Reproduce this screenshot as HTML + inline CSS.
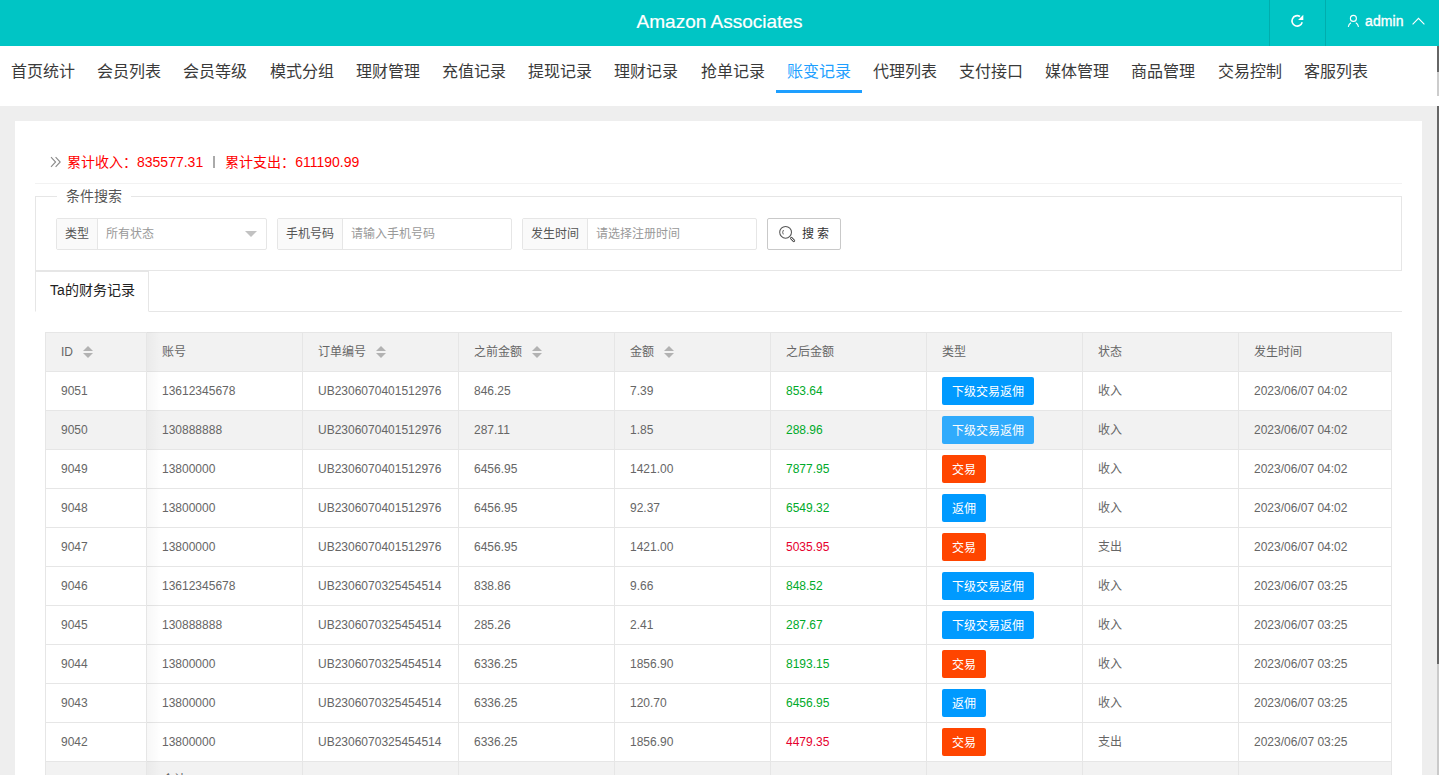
<!DOCTYPE html>
<html lang="zh-CN"><head><meta charset="utf-8"><title>Amazon Associates</title>
<style>
*{margin:0;padding:0;box-sizing:border-box}
html,body{width:1439px;height:775px;overflow:hidden;background:#eeeeee;font-family:"Liberation Sans",sans-serif;color:#333}
ul{list-style:none}
.hdr{position:absolute;left:0;top:0;width:1439px;height:46px;background:#00c5c5}
.title{position:absolute;left:0;width:1439px;top:0;height:46px;line-height:44px;text-align:center;color:#fff;font-size:19px;-webkit-text-stroke:0.2px #fff}
.sep{position:absolute;top:0;width:1px;height:46px;background:rgba(0,0,0,0.12)}
.s1{left:1269px}.s2{left:1325px}
.refresh{position:absolute;left:1290px;top:14px}
.user{position:absolute;left:1346px;top:13px}
.admin{position:absolute;left:1365px;top:12px;color:#fff;font-size:14px;line-height:18px;-webkit-text-stroke:0.35px #fff;letter-spacing:0.1px}
.chev{position:absolute;left:1412px;top:17px}
.nav{position:absolute;left:0;top:46px;width:1439px;height:60px;background:#fff}
.nav ul{position:absolute;left:0;top:0;white-space:nowrap;font-size:0}
.nav li{display:inline-block;padding:0 11px;width:86.2px;height:60px;line-height:51px;font-size:16px;color:#3a3a3a;position:relative;text-align:left}
.nav li.act{color:#1e9fff}
.nav li.act:after{content:"";position:absolute;left:0;right:0;top:44px;height:3px;background:#1e9fff}
.navsb1{position:absolute;left:1437px;top:0;width:2px;height:26px;background:#666}
.navsb2{position:absolute;left:1437px;top:26px;width:2px;height:24px;background:#ccc}
.sb{position:absolute;left:1437px;top:106px;width:2px;height:558px;background:#666}
.sbt{position:absolute;left:1437px;top:664px;width:2px;height:111px;background:#cacaca}
.main{position:absolute;left:0;top:106px;width:1437px;height:669px;background:#eee}
.card{position:absolute;left:15px;top:15px;width:1407px;height:700px;background:#fff}
.sum{position:absolute;left:35px;top:31px;height:20px;line-height:20px;font-size:14px;white-space:nowrap}
.dbl{position:absolute;left:0;top:4px}
.sum .red{color:#f00}
.sum span.red:first-of-type{margin-left:17px}
.bar{display:inline-block;width:2px;height:12px;background:#aaa;margin:0 10px 0 10px;vertical-align:-1px}
.hr{position:absolute;left:20px;top:62px;width:1367px;height:1px;background:#f2f2f2}
.fs{position:absolute;left:20px;top:75px;width:1367px;height:75px;border:1px solid #e6e6e6}
.legend{position:absolute;left:21px;top:-11px;padding:0 9px;background:#fff;font-size:14px;line-height:20px;color:#555}
.grp{position:absolute;top:21px;height:32px;border:1px solid #e6e6e6;border-radius:2px;background:#fff}
.lab{position:absolute;left:0;top:0;height:30px;line-height:30px;background:#fafafa;border-right:1px solid #e6e6e6;font-size:12px;color:#555;padding:0 8px}
.inp{position:absolute;top:0;height:30px;line-height:30px;font-size:12px;padding-left:8px}
.ph{color:#999}
.g1{left:20px;width:211px}.g1 .lab{width:41px}.g1 .inp{left:41px}
.g2{left:241px;width:235px}.g2 .lab{width:65px}.g2 .inp{left:65px}
.g3{left:486px;width:235px}.g3 .lab{width:65px}.g3 .inp{left:65px}
.caret{position:absolute;left:188px;top:12px;width:0;height:0;border-left:6px solid transparent;border-right:6px solid transparent;border-top:6px solid #c2c2c2}
.btn{position:absolute;left:731px;top:21px;width:74px;height:32px;border:1px solid #c9c9c9;border-radius:2px;background:#fff}
.mag{position:absolute;left:10px;top:6px}
.bt{position:absolute;left:34px;top:0;line-height:30px;font-size:12px;color:#333}
.tabs{position:absolute;left:20px;top:150px;width:1367px;height:41px;border-bottom:1px solid #e6e6e6}
.tab{position:absolute;left:0;top:0;width:114px;height:41px;border:1px solid #e6e6e6;border-bottom:1px solid #fff;line-height:37px;font-size:14px;color:#222;padding-left:14px}
.tbl{position:absolute;left:30px;top:211px;width:1347px}
table{border-collapse:collapse;table-layout:fixed;width:1347px;font-size:12px;color:#666}
th,td{border:1px solid #e6e6e6;height:39px;padding:0 15px;text-align:left;font-weight:normal;white-space:nowrap;overflow:hidden}
thead th{background:#f2f2f2;color:#666}
tr.hov td{background:#f2f2f2}
tr.tot td{background:#f2f2f2}
td.g{color:#00aa2a}
td.r{color:#e6002e}
.bd{display:inline-block;height:28px;line-height:28px;padding:0 10px;color:#fff;border-radius:2px;font-size:12px;vertical-align:middle}
.bd.b{background:#009aff}
.bd.o{background:#ff4500}
tr.hov .bd{opacity:.8}
.sort{display:inline-block;position:relative;width:10px;height:12px;margin-left:10px;vertical-align:-2px;top:0}
.sort i{position:absolute;left:0;width:0;height:0;border-left:5px solid transparent;border-right:5px solid transparent}
.sort .up{top:0;border-bottom:5px solid #b2b2b2}
.sort .dn{top:7px;border-top:5px solid #b2b2b2}
.fixsh{position:absolute;left:102px;top:0;width:14px;height:600px;background:linear-gradient(to right,rgba(0,0,0,0.03),rgba(0,0,0,0))}

.cj{position:relative;top:-2px}
.bd{padding-top:1px}
.tot td{vertical-align:top;line-height:12px;padding-top:12px}
.tot .cj{top:0}
.sort.sc{top:-2px}

</style></head><body>
<div class="hdr">
  <div class="title">Amazon Associates</div>
  <div class="sep s1"></div><div class="sep s2"></div>
  <svg class="refresh" width="14" height="14" viewBox="0 0 14 14"><path d="M12.2 8.3 A5.2 5.2 0 1 1 10.0 2.5" fill="none" stroke="#fff" stroke-width="1.6"/><path d="M13.3 0.8 L13.3 6.0 L8.1 6.0 Z" fill="#fff"/></svg>
  <svg class="user" width="14" height="15" viewBox="0 0 14 15"><circle cx="7.4" cy="5.4" r="3.0" fill="none" stroke="#fff" stroke-width="1.1"/><path d="M2.3 13.9 C2.6 11.9 3.6 10.5 5.0 9.8" fill="none" stroke="#fff" stroke-width="1.1"/><path d="M9.8 9.8 C11.2 10.5 12.2 11.9 12.5 13.9" fill="none" stroke="#fff" stroke-width="1.1"/></svg>
  <div class="admin">admin</div>
  <svg class="chev" width="13" height="8" viewBox="0 0 13 8"><path d="M0.6 7.4 L6.5 1.3 L12.4 7.4" fill="none" stroke="#fff" stroke-width="1.1"/></svg>
</div>
<div class="nav"><ul><li>首页统计</li><li>会员列表</li><li>会员等级</li><li>模式分组</li><li>理财管理</li><li>充值记录</li><li>提现记录</li><li>理财记录</li><li>抢单记录</li><li class=act>账变记录</li><li>代理列表</li><li>支付接口</li><li>媒体管理</li><li>商品管理</li><li>交易控制</li><li>客服列表</li></ul><div class="navsb1"></div><div class="navsb2"></div></div>
<div class="main">
  <div class="card">
    <div class="sum"><svg class="dbl" width="12" height="12" viewBox="0 0 12 12"><path d="M1 1.2 L5.6 6 L1 10.8 M5.6 1.2 L10.2 6 L5.6 10.8" fill="none" stroke="#8a8a8a" stroke-width="1.1"/></svg><span class="red">累计收入：835577.31</span><span class="bar"></span><span class="red">累计支出：611190.99</span></div>
    <div class="hr"></div>
    <div class="fs"><div class="legend">条件搜索</div>
      <div class="grp g1"><span class="lab">类型</span><span class="inp ph">所有状态</span><i class="caret"></i></div>
      <div class="grp g2"><span class="lab">手机号码</span><span class="inp ph">请输入手机号码</span></div>
      <div class="grp g3"><span class="lab">发生时间</span><span class="inp ph">请选择注册时间</span></div>
      <div class="btn"><svg class="mag" width="19" height="19" viewBox="0 0 19 19"><circle cx="7.6" cy="7.3" r="5.9" fill="none" stroke="#555" stroke-width="1.05"/><path d="M13.4 13.3 L15.8 15.7" stroke="#555" stroke-width="2.7" stroke-linecap="round"/><path d="M13.4 13.3 L15.8 15.7" stroke="#fff" stroke-width="1.0" stroke-linecap="round"/><path d="M5.5 5.0 A3.8 3.8 0 0 0 5.3 9.4" fill="none" stroke="#555" stroke-width="0.9"/></svg><span class="bt">搜 索</span></div>
    </div>
    <div class="tabs"><div class="tab">Ta的财务记录</div></div>
    <div class="tbl">
      <table>
        <colgroup><col style="width:101px"><col style="width:156px"><col style="width:156px"><col style="width:156px"><col style="width:156px"><col style="width:156px"><col style="width:156px"><col style="width:156px"><col style="width:153px"></colgroup>
        <thead><tr><th>ID<span class="sort"><i class="up"></i><i class="dn"></i></span></th><th><span class=cj>账号</span></th><th><span class=cj>订单编号</span><span class="sort sc"><i class="up"></i><i class="dn"></i></span></th><th><span class=cj>之前金额</span><span class="sort sc"><i class="up"></i><i class="dn"></i></span></th><th><span class=cj>金额</span><span class="sort sc"><i class="up"></i><i class="dn"></i></span></th><th><span class=cj>之后金额</span></th><th><span class=cj>类型</span></th><th><span class=cj>状态</span></th><th><span class=cj>发生时间</span></th></tr></thead>
        <tbody><tr><td>9051</td><td>13612345678</td><td>UB2306070401512976</td><td>846.25</td><td>7.39</td><td class="g">853.64</td><td class="tb"><span class="bd b">下级交易返佣</span></td><td><span class="cj">收入</span></td><td>2023/06/07 04:02</td></tr><tr class="hov"><td>9050</td><td>130888888</td><td>UB2306070401512976</td><td>287.11</td><td>1.85</td><td class="g">288.96</td><td class="tb"><span class="bd b">下级交易返佣</span></td><td><span class="cj">收入</span></td><td>2023/06/07 04:02</td></tr><tr><td>9049</td><td>13800000</td><td>UB2306070401512976</td><td>6456.95</td><td>1421.00</td><td class="g">7877.95</td><td class="tb"><span class="bd o">交易</span></td><td><span class="cj">收入</span></td><td>2023/06/07 04:02</td></tr><tr><td>9048</td><td>13800000</td><td>UB2306070401512976</td><td>6456.95</td><td>92.37</td><td class="g">6549.32</td><td class="tb"><span class="bd b">返佣</span></td><td><span class="cj">收入</span></td><td>2023/06/07 04:02</td></tr><tr><td>9047</td><td>13800000</td><td>UB2306070401512976</td><td>6456.95</td><td>1421.00</td><td class="r">5035.95</td><td class="tb"><span class="bd o">交易</span></td><td><span class="cj">支出</span></td><td>2023/06/07 04:02</td></tr><tr><td>9046</td><td>13612345678</td><td>UB2306070325454514</td><td>838.86</td><td>9.66</td><td class="g">848.52</td><td class="tb"><span class="bd b">下级交易返佣</span></td><td><span class="cj">收入</span></td><td>2023/06/07 03:25</td></tr><tr><td>9045</td><td>130888888</td><td>UB2306070325454514</td><td>285.26</td><td>2.41</td><td class="g">287.67</td><td class="tb"><span class="bd b">下级交易返佣</span></td><td><span class="cj">收入</span></td><td>2023/06/07 03:25</td></tr><tr><td>9044</td><td>13800000</td><td>UB2306070325454514</td><td>6336.25</td><td>1856.90</td><td class="g">8193.15</td><td class="tb"><span class="bd o">交易</span></td><td><span class="cj">收入</span></td><td>2023/06/07 03:25</td></tr><tr><td>9043</td><td>13800000</td><td>UB2306070325454514</td><td>6336.25</td><td>120.70</td><td class="g">6456.95</td><td class="tb"><span class="bd b">返佣</span></td><td><span class="cj">收入</span></td><td>2023/06/07 03:25</td></tr><tr><td>9042</td><td>13800000</td><td>UB2306070325454514</td><td>6336.25</td><td>1856.90</td><td class="r">4479.35</td><td class="tb"><span class="bd o">交易</span></td><td><span class="cj">支出</span></td><td>2023/06/07 03:25</td></tr><tr class="tot"><td></td><td><span class="cj">合计</span></td><td></td><td></td><td></td><td></td><td></td><td></td><td></td></tr></tbody>
      </table>
      <div class="fixsh"></div>
    </div>
  </div>
</div>
<div class="sb"></div><div class="sbt"></div>
</body></html>
